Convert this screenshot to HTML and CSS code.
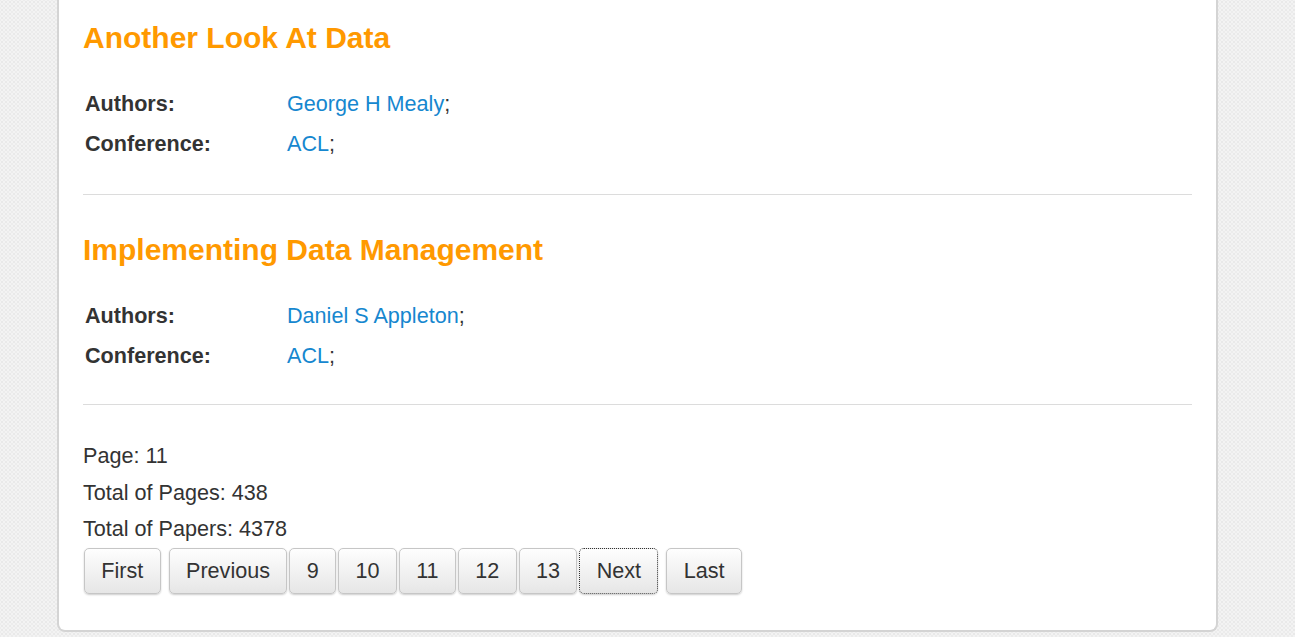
FILE: index.html
```html
<!DOCTYPE html>
<html>
<head>
<meta charset="utf-8">
<title>Papers</title>
<link rel="stylesheet" href="styles.css">
</head>
<body>
<div class="card">
  <div class="paper">
    <h2 class="title">Another Look At Data</h2>
    <table class="meta">
      <tr><td class="label">Authors:</td><td class="value"><a href="#">George H Mealy</a>;</td></tr>
      <tr><td class="label">Conference:</td><td class="value"><a href="#">ACL</a>;</td></tr>
    </table>
  </div>
  <div class="paper">
    <h2 class="title">Implementing Data Management</h2>
    <table class="meta">
      <tr><td class="label">Authors:</td><td class="value"><a href="#">Daniel S Appleton</a>;</td></tr>
      <tr><td class="label">Conference:</td><td class="value"><a href="#">ACL</a>;</td></tr>
    </table>
  </div>
  <div class="stats">
    <p class="stat">Page: 11</p>
    <p class="stat">Total of Pages: 438</p>
    <p class="stat">Total of Papers: 4378</p>
  </div>
  <div class="pager"><a class="btn" href="#">First</a> <a class="btn" href="#">Previous</a><a class="btn" href="#">9</a><a class="btn" href="#">10</a><a class="btn" href="#">11</a><a class="btn" href="#">12</a><a class="btn" href="#">13</a><a class="btn focus" href="#">Next</a> <a class="btn" href="#">Last</a></div>
</div>
</body>
</html>
```
FILE: styles.css
```css
html, body {
  margin: 0;
  padding: 0;
}
body {
  background-color: #f3f3f3;
  background-image: radial-gradient(#e9e9e9 0.8px, transparent 1px), radial-gradient(#ececec 0.8px, transparent 1px);
  background-size: 4px 4px, 4px 4px;
  background-position: 0 0, 2px 2px;
  font-family: "Liberation Sans", Arial, sans-serif;
  color: #333;
  font-size: 21.6px;
}
.card {
  margin-left: 57px;
  width: 1161px;
  box-sizing: border-box;
  background: #fff;
  border: 2px solid #d4d4d4;
  border-top: none;
  border-radius: 0 0 8px 8px;
  padding: 21px 24px 36px;
}
.paper {
  border-bottom: 1px solid #dcdcdc;
  padding-bottom: 30px;
  margin-bottom: 38px;
}
.paper + .paper {
  padding-bottom: 28px;
}
.title {
  margin: 0;
  font-size: 30px;
  line-height: 34px;
  font-weight: bold;
  color: #ff9900;
}
.meta {
  border-collapse: collapse;
  margin-top: 29px;
}
.meta td {
  padding: 0 2px;
  height: 40px;
  line-height: 40px;
}
.label {
  font-weight: bold;
  width: 198px;
}
.value a {
  color: #1687cf;
  text-decoration: none;
}
.stats {
  margin-top: -5px;
}
.stat {
  margin: 0;
  line-height: 36.5px;
}
.pager {
  margin-top: 0;
  padding-left: 1px;
  line-height: 46px;
}
.btn {
  display: inline-block;
  vertical-align: top;
  height: 46px;
  line-height: 44px;
  box-sizing: border-box;
  padding: 0 16.35px;
  margin-right: 2px;
  border: 1px solid #c6c6c6;
  border-radius: 5px;
  background: linear-gradient(#fefefe, #e6e6e6);
  box-shadow: 0 1px 2px rgba(0, 0, 0, 0.2);
  color: #333;
  text-decoration: none;
  font-size: 21.6px;
}
.btn.focus {
  border: 1px dotted #333;
}
```
